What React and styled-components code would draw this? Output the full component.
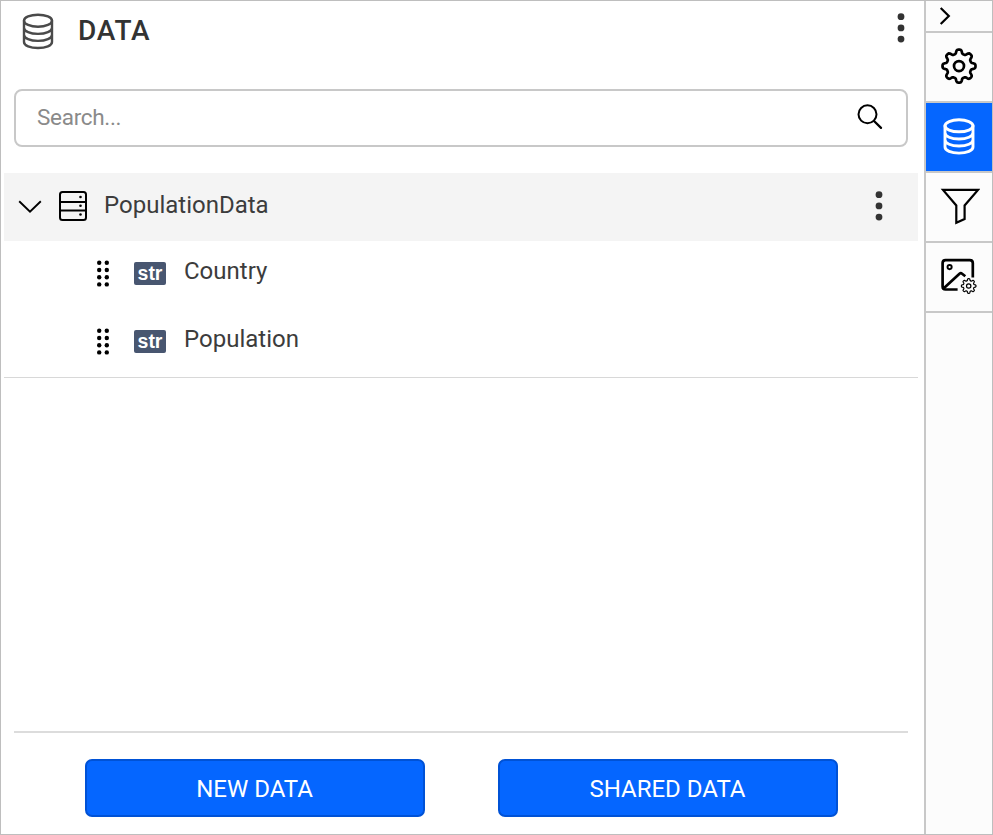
import React from "react";
import styled, { createGlobalStyle } from "styled-components";

const GlobalStyle = createGlobalStyle`
  * { box-sizing: border-box; }
  body { margin: 0; background: #fff; }
  button, input { font: inherit; }
`;

const Frame = styled.div`
  display: flex;
  width: 993px;
  height: 835px;
  border: 1px solid #bebebe;
  background: #fff;
  color: #3c3c3c;
  font: 400 24px/28px Roboto, "Liberation Sans", sans-serif;
`;

const Panel = styled.main`
  flex: 1;
  display: flex;
  flex-direction: column;
`;

const Header = styled.header`
  display: flex;
  align-items: flex-start;
  height: 88px;
  padding: 8px 15px 0 17px;
`;

const Title = styled.h1`
  flex: 1;
  margin: 6px 0 0 20px;
  color: #333;
  font-size: 28px;
  line-height: 32px;
  font-weight: 500;
  letter-spacing: 0.8px;
`;

const Icon = styled.svg`
  display: block;
  flex: none;
  fill: none;
  stroke: ${(p) => p.$color || "#000"};
  stroke-width: ${(p) => p.$weight || 2};
  stroke-linecap: round;
  stroke-linejoin: round;
`;

const IconButton = styled.button`
  display: flex;
  flex: none;
  padding: ${(p) => (p.$lower ? "1px 0 0" : "0 0 2px")};
  border: 0;
  background: none;
`;

const SearchBox = styled.label`
  display: flex;
  align-items: center;
  height: 58px;
  margin: 0 16px 0 13px;
  padding: 0 21px 2px 21px;
  border: 2px solid #c8c8c8;
  border-radius: 8px;
`;

const SearchInput = styled.input`
  flex: 1;
  min-width: 0;
  padding: 0;
  border: 0;
  outline: 0;
  background: none;
  font-size: 22.5px;
  letter-spacing: -0.3px;
  &::placeholder { color: #8a8a8a; opacity: 1; }
`;

const Tree = styled.section`
  margin: 26px 6px 0 3px;
  border-bottom: 1px solid #d8d8d8;
`;

const SourceRow = styled.div`
  display: flex;
  align-items: center;
  height: 68px;
  padding: 0 31px 0 10px;
  background: #f4f4f4;
`;

const SourceName = styled.span`
  flex: 1;
  margin: 0 0 4px 12px;
`;

const FieldRow = styled.div`
  display: flex;
  align-items: center;
  height: 68px;
  padding: 0 0 4px 89px;
`;

const TypeBadge = styled.span`
  width: 32px;
  height: 23px;
  margin: 0 18px 0 21px;
  border-radius: 2px;
  background: #485670;
  color: #fff;
  text-align: center;
  font: 700 19.5px/23px "Liberation Sans", Arial, sans-serif;
`;

const FieldName = styled.span`
  margin-bottom: 4px;
`;

const Footer = styled.footer`
  display: flex;
  justify-content: center;
  gap: 73px;
  height: 103px;
  margin: auto 16px 0 13px;
  padding: 26px 0 0;
  border-top: 2px solid #dcdcdc;
`;

const ActionButton = styled.button`
  width: 340px;
  height: 58px;
  padding: 1px 0 0;
  border: 2px solid #0052d6;
  border-radius: 7px;
  background: #0566ff;
  color: #fff;
`;

const Rail = styled.nav`
  width: 68px;
  border-left: 2px solid #c8c8c8;
  background: #fcfcfc;
`;

const RailItem = styled.button`
  display: flex;
  align-items: center;
  justify-content: center;
  width: 66px;
  height: ${(p) => (p.$short ? 32 : 70)}px;
  padding: 0;
  border: 0;
  border-bottom: 2px solid #c8c8c8;
  background: ${(p) => (p.$active ? "#0566ff" : "#fcfcfc")};
`;

function cogPath(cx, cy, inner, outer) {
  const mid = (inner + outer) / 2;
  const amp = (outer - inner) / 2;
  const points = [];
  for (let i = 0; i < 160; i += 1) {
    const t = (i / 160) * Math.PI * 2;
    const r = mid + (amp * Math.tanh(1.9 * Math.cos(8 * t))) / Math.tanh(1.9);
    points.push(`${(cx + r * Math.sin(t)).toFixed(2)} ${(cy - r * Math.cos(t)).toFixed(2)}`);
  }
  return `M${points.join("L")}Z`;
}

const DatabaseIcon = ({ color, weight, shift = 0 }) => (
  <Icon width="40" height="44" $color={color} $weight={weight}>
    <g transform={`translate(0 ${shift})`}>
      <ellipse cx="20" cy="11.3" rx="14" ry="6" />
      <path d="M6 11.3V32.5C6 36.1 12.2 38.6 20 38.6S34 36.1 34 32.5V11.3M6 18.3C6 21.9 12.2 24.5 20 24.5S34 21.9 34 18.3M6 25.3C6 28.9 12.2 31.5 20 31.5S34 28.9 34 25.3" />
    </g>
  </Icon>
);

const MoreIcon = () => (
  <Icon width="16" height="36" $color="none">
    {[6.7, 17.9, 29.1].map((y) => <circle key={y} cx="8" cy={y} r="3.4" fill="#333" />)}
  </Icon>
);

const DragIcon = () => (
  <Icon width="20" height="30" $color="none">
    {[4.8, 12, 19.2, 26.4].map((y) => (
      <React.Fragment key={y}>
        <circle cx="6.2" cy={y} r="2.2" fill="#000" />
        <circle cx="13.8" cy={y} r="2.2" fill="#000" />
      </React.Fragment>
    ))}
  </Icon>
);

const SearchIcon = () => (
  <Icon width="30" height="30">
    <circle cx="12.5" cy="12.3" r="9" />
    <path d="M19 19L26 25.9" strokeWidth="2.3" />
  </Icon>
);

const ChevronIcon = () => (
  <Icon width="32" height="30" $weight="1.9">
    <path strokeLinecap="butt" strokeLinejoin="miter" d="M5.2 9.3L16 19.7L26.8 9.3" />
  </Icon>
);

const TableIcon = () => (
  <Icon width="46" height="36">
    <rect x="14" y="3" width="26" height="28" rx="2.5" />
    <path d="M14 13H40M14 21.5H40" />
    {[8, 16.7, 25.5].map((y) => <circle key={y} cx="34.5" cy={y} r="1.3" fill="#000" stroke="none" />)}
  </Icon>
);

const CogIcon = () => (
  <Icon width="40" height="40" $weight="2.7">
    <path d={cogPath(20, 19.1, 12.5, 16.5)} />
    <circle cx="20" cy="19.1" r="5" />
  </Icon>
);

const FilterIcon = () => (
  <Icon width="42" height="42" $weight="2.2">
    <path strokeLinejoin="miter" d="M5 3.9H40L26.6 19.5V33L18.3 36.8V19.5Z" />
  </Icon>
);

const ImageCogIcon = () => (
  <Icon width="40" height="40" $weight="2.7">
    <path d="M18.6 32.5H6.6Q3.6 32.5 3.6 29.5V6.1Q3.6 3.1 6.6 3.1H30.8Q33.8 3.1 33.8 6.1V20.5" strokeLinecap="butt" />
    <path d="M4.5 31.5L20.5 16.7Q21.8 15.6 23.1 16.7L26.3 19.2" strokeLinecap="butt" />
    <circle cx="10.6" cy="10.1" r="2.1" strokeWidth="1.9" />
    <path d={cogPath(29.7, 29, 5.4, 7.3)} strokeWidth="1.2" />
    <circle cx="29.7" cy="29" r="2.2" strokeWidth="1.2" />
  </Icon>
);

const CollapseIcon = () => (
  <Icon width="66" height="30" $weight="2.2">
    <path strokeLinecap="butt" strokeLinejoin="miter" d="M14.7 7L22.8 15L14.7 23" />
  </Icon>
);

export default function App() {
  return (
    <>
      <GlobalStyle />
      <Frame>
        <Panel>
          <Header>
            <DatabaseIcon color="#4a4a4a" weight="2.4" shift={0.4} />
            <Title>DATA</Title>
            <IconButton $lower aria-label="Data options"><MoreIcon /></IconButton>
          </Header>
          <SearchBox>
            <SearchInput placeholder="Search..." aria-label="Search" />
            <SearchIcon />
          </SearchBox>
          <Tree>
            <SourceRow>
              <ChevronIcon />
              <TableIcon />
              <SourceName>PopulationData</SourceName>
              <IconButton aria-label="PopulationData options"><MoreIcon /></IconButton>
            </SourceRow>
            {["Country", "Population"].map((name) => (
              <FieldRow key={name}>
                <DragIcon />
                <TypeBadge>str</TypeBadge>
                <FieldName>{name}</FieldName>
              </FieldRow>
            ))}
          </Tree>
          <Footer>
            <ActionButton>NEW DATA</ActionButton>
            <ActionButton>SHARED DATA</ActionButton>
          </Footer>
        </Panel>
        <Rail>
          <RailItem $short aria-label="Collapse"><CollapseIcon /></RailItem>
          <RailItem aria-label="Settings"><CogIcon /></RailItem>
          <RailItem $active aria-label="Data"><DatabaseIcon color="#fff" weight="2.9" shift={-0.5} /></RailItem>
          <RailItem aria-label="Filter"><FilterIcon /></RailItem>
          <RailItem aria-label="Image settings"><ImageCogIcon /></RailItem>
        </Rail>
      </Frame>
    </>
  );
}
